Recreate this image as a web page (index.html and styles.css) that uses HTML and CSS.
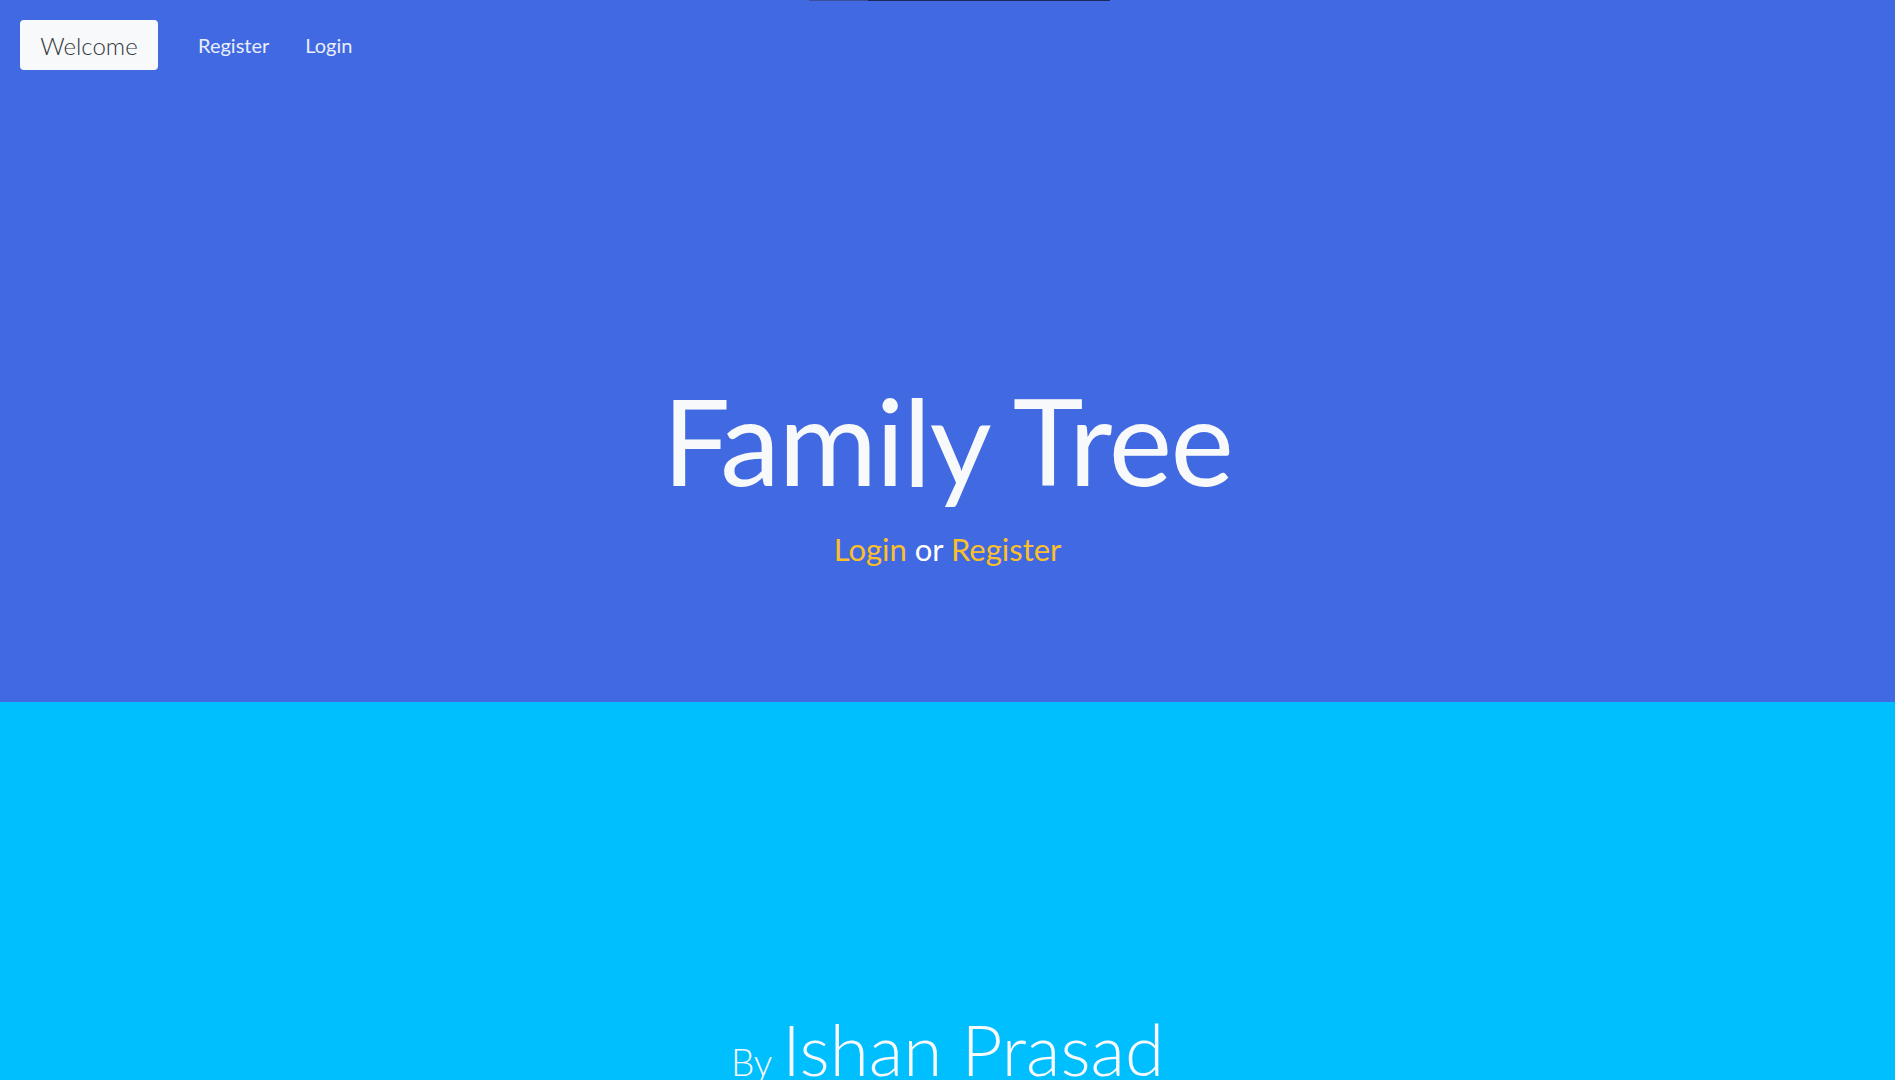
FILE: index.html
```html
<!DOCTYPE html>
<html lang="en">
<head>
<meta charset="utf-8">
<title>Family Tree</title>
<link rel="stylesheet" href="styles.css">
</head>
<body>
<div class="topline"><span class="topline-a"></span><span class="topline-b"></span></div>
<section class="hero">
  <nav class="navbar">
    <a class="btn-welcome" href="#">Welcome</a>
    <a class="nav-link" href="#">Register</a>
    <a class="nav-link" href="#">Login</a>
  </nav>
  <div class="hero-body">
    <h1 class="title">Family Tree</h1>
    <p class="lead"><a class="gold" href="#">Login</a> or <a class="gold" href="#">Register</a></p>
  </div>
</section>
<section class="about">
  <h2 class="byline"><span class="by">By</span><span class="name">Ishan Prasad</span></h2>
</section>
</body>
</html>
```
FILE: styles.css
```css
* { box-sizing: border-box; }
html, body { margin: 0; padding: 0; }
body {
  font-family: Lato, "Open Sans", sans-serif;
  color: #f8f9fa;
  background: #00bfff;
  overflow: hidden;
  height: 1080px;
}
a { text-decoration: none; }

.topline {
  position: absolute;
  top: 0;
  left: 809px;
  display: flex;
  height: 1px;
}
.topline-a { width: 59px; background: #3a4f99; }
.topline-b { width: 242px; background: #1b2659; }

.hero {
  background: #4169e1;
  height: 702px;
  display: flex;
  flex-direction: column;
}
.navbar {
  display: flex;
  align-items: center;
  padding: 20px 20px 0;
}
.btn-welcome {
  display: flex;
  align-items: center;
  justify-content: center;
  width: 138px;
  height: 50px;
  background: #f8f9fa;
  color: #33373d;
  border-radius: 4px;
  font-size: 24px;
  font-weight: 300;
  margin-right: 22px;
}
.nav-link {
  color: #e9eefb;
  font-size: 20px;
  padding: 0 18px;
}
.hero-body {
  display: flex;
  flex-direction: column;
  align-items: center;
  padding-top: 298px;
}
.title {
  margin: 0;
  font-size: 120px;
  font-weight: 400;
  letter-spacing: -1.5px;
  line-height: 1.2;
  color: #f8f9fa;
}
.lead {
  margin: 18px 0 0;
  font-size: 31px;
  font-weight: 400;
  color: #ffffff;
}
.gold { color: #fbbf2c; }

.about {
  display: flex;
  justify-content: center;
  padding-top: 304px;
}
.byline {
  margin: 0;
  font-size: 71px;
  font-weight: 300;
  line-height: 1.2;
  color: #f8f9fa;
}
.by { font-size: 37px; margin-right: 10px; }
```
